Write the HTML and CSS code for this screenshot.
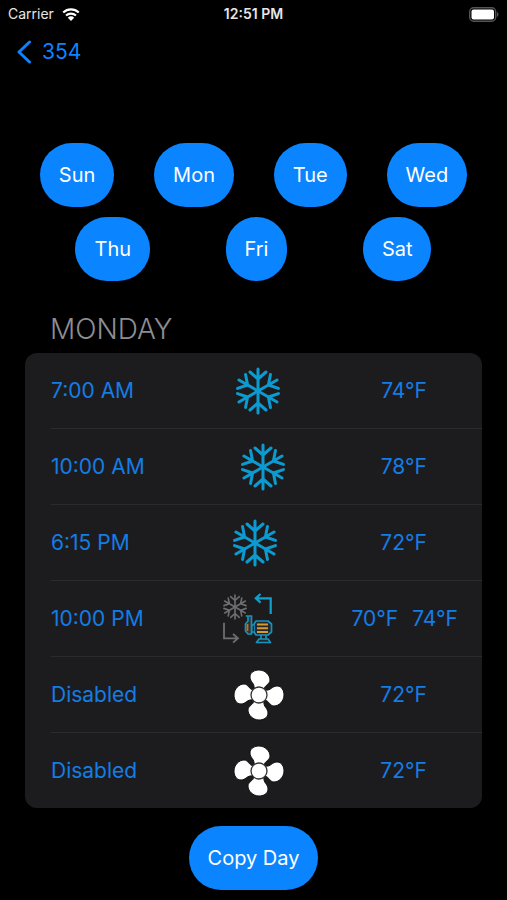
FILE: index.html
```html
<!DOCTYPE html>
<html lang="en">
<head>
<meta charset="utf-8">
<meta name="viewport" content="width=device-width, initial-scale=1">
<title>354 Schedule</title>
<link rel="stylesheet" href="styles.css">
</head>
<body>
<svg class="symbols" aria-hidden="true">
  <symbol id="flake" viewBox="-24 -24 48 48">
    <g fill="none" stroke="currentColor" stroke-linecap="round" stroke-linejoin="round">
      <path id="arm" d="M0 0V-22M-8 -19L0 -12L8 -19"/>
      <use href="#arm" transform="rotate(60)"/>
      <use href="#arm" transform="rotate(120)"/>
      <use href="#arm" transform="rotate(180)"/>
      <use href="#arm" transform="rotate(240)"/>
      <use href="#arm" transform="rotate(300)"/>
    </g>
  </symbol>
  <symbol id="fan" viewBox="-26 -26 52 52">
    <g fill="#fff" stroke="#111" stroke-width="1">
      <path id="blade" d="M-5 -6C-4 -12 -9 -13 -9 -18C-9 -23 -4 -25 0 -25C6 -25 11 -20 11 -15C11 -11 6 -10 5 -6Z"/>
      <use href="#blade" transform="rotate(90)"/>
      <use href="#blade" transform="rotate(180)"/>
      <use href="#blade" transform="rotate(270)"/>
      <circle r="8" stroke="#333" stroke-width="1.300"/>
    </g>
  </symbol>
</svg>

<header class="status">
  <div class="carrier">Carrier
    <svg class="wifi" viewBox="0 0 18 13" aria-hidden="true">
      <path d="M1.200 4.500A11.500 11.500 0 0 1 16.800 4.500M4 7.500A7.500 7.500 0 0 1 14 7.500" fill="none" stroke="#fff" stroke-width="2.200"/>
      <path d="M9 13L5.800 9.700A4.500 4.500 0 0 1 12.200 9.700Z" fill="#fff"/>
    </svg>
  </div>
  <time class="clock">12:51 PM</time>
  <svg class="battery" viewBox="0 0 30 15" role="img" aria-label="Battery full">
    <rect x="0.700" y="0.700" width="26" height="13.600" rx="4" fill="none" stroke="#555558" stroke-width="1.400"/>
    <rect x="2.500" y="2.500" width="22.500" height="10" rx="2" fill="#fff"/>
    <path d="M28 5C30 6 30 9 28 10Z" fill="#555558"/>
  </svg>
</header>

<nav class="nav">
  <a class="back" href="#">
    <svg class="chevron" viewBox="0 0 14 24" aria-hidden="true"><path d="M12.500 2L2 12L12.500 22" fill="none" stroke="currentColor" stroke-width="3" stroke-linecap="round" stroke-linejoin="round"/></svg>
    354
  </a>
</nav>

<main>
  <div class="days">
    <div class="day-row">
      <button class="pill">Sun</button>
      <button class="pill">Mon</button>
      <button class="pill">Tue</button>
      <button class="pill">Wed</button>
    </div>
    <div class="day-row">
      <button class="pill">Thu</button>
      <button class="pill">Fri</button>
      <button class="pill">Sat</button>
    </div>
  </div>

  <h1 class="title">MONDAY</h1>
  <ul class="card">
    <li><button class="entry"><span>7:00 AM</span><svg class="icon flake"><use href="#flake"/></svg><span class="temp">74°F</span></button></li>
    <li><button class="entry"><span>10:00 AM</span><svg class="icon flake"><use href="#flake"/></svg><span class="temp">78°F</span></button></li>
    <li><button class="entry"><span>6:15 PM</span><svg class="icon flake"><use href="#flake"/></svg><span class="temp">72°F</span></button></li>
    <li><button class="entry"><span>10:00 PM</span>
      <svg class="icon" viewBox="-1 -1 52 52">
        <g fill="none" stroke="#6e6e70" stroke-width="1.800" color="#6e6e70">
          <use href="#flake" x="-1" y="0" width="26" height="26" stroke-width="3"/>
          <path d="M1 28.700V44.300H15M10 40L15 44.300L10 48.600"/>
        </g>
        <path d="M47.700 20V4.300H33M37.500 0L32.800 4.300L37.500 8.600" fill="none" stroke="#0fa0cf" stroke-width="2.200"/>
        <g stroke="#1692bd" stroke-width="1.700" fill="#25272a" stroke-linejoin="round">
          <path d="M33.500 48.500L36 45H45L47.500 48.500Z"/>
          <path d="M38 41V45M43 41V45" fill="none"/>
          <path d="M33 27H45L48.500 30V38L45 41H33L31 38V30Z"/>
          <path d="M31 31H28.500V38H31"/>
          <path d="M22.700 22H29.300M25 22V27L22.500 30V37L25 40H28.500V22" fill="#34302c"/>
        </g>
        <path d="M24.500 30V37" stroke="#b8742c" stroke-width="1.800"/>
        <path d="M34 30.500H45M34 34.200H45M34 38H45" stroke="#d69a35" stroke-width="2"/>
      </svg>
      <span class="pair"><span>70°F</span><span>74°F</span></span></button></li>
    <li><button class="entry"><span>Disabled</span><svg class="icon"><use href="#fan"/></svg><span class="temp">72°F</span></button></li>
    <li><button class="entry"><span>Disabled</span><svg class="icon"><use href="#fan"/></svg><span class="temp">72°F</span></button></li>
  </ul>

  <div class="actions"><button class="pill">Copy Day</button></div>
</main>
</body>
</html>
```
FILE: styles.css
```css
* { box-sizing: border-box; }

body {
  margin: 0;
  background: #000;
  color: #0a84ff;
  font-family: Inter, "Liberation Sans", sans-serif;
  font-size: 21px;
  line-height: 28px;
}

button {
  border: 0;
  font: inherit;
  cursor: pointer;
}

.symbols {
  position: absolute;
  width: 0;
  height: 0;
}

.status {
  display: grid;
  grid-template-columns: 1fr auto 1fr;
  align-items: center;
  height: 28px;
  padding: 0 8px;
  color: #e6e6e6;
  font-size: 14px;
  line-height: 20px;
}

.carrier {
  display: flex;
  align-items: center;
  gap: 8px;
}

.wifi { width: 18px; height: 13px; }

.clock { font-weight: 600; }

.battery {
  justify-self: end;
  width: 30px;
  height: 15px;
}

.nav {
  height: 50px;
  padding: 10px 17px;
}

.back {
  display: inline-flex;
  align-items: center;
  gap: 11px;
  color: inherit;
  text-decoration: none;
}

.chevron { width: 14px; height: 24px; }

.days {
  display: grid;
  gap: 10px;
  padding-top: 65px;
}

.day-row {
  display: flex;
  justify-content: space-evenly;
}

.pill {
  height: 64px;
  padding: 0 19px;
  border-radius: 32px;
  background: #0a84ff;
  color: #fff;
  font-size: 20px;
}

.title {
  margin: 30px 50px 5px;
  color: #8d8d92;
  font-size: 28px;
  font-weight: 300;
  line-height: 37px;
}

.card {
  margin: 0 25px;
  padding: 0;
  list-style: none;
  background: #1c1c1e;
  border-radius: 12px;
}

.card li + li::before {
  content: "";
  display: block;
  height: 1px;
  margin-left: 26px;
  background: #2b2b2d;
}

.entry {
  display: flex;
  align-items: center;
  justify-content: space-between;
  width: 100%;
  height: 75px;
  padding: 0 24px 0 26px;
  background: none;
  color: #147ce5;
}

.icon { width: 52px; height: 52px; }

.flake {
  width: 48px;
  height: 48px;
  color: #0c9bd0;
  stroke-width: 3px;
}

.temp { margin-right: 31px; }

.pair { display: flex; gap: 14px; }

.actions {
  display: flex;
  justify-content: center;
  padding: 18px 0 10px;
}
```
